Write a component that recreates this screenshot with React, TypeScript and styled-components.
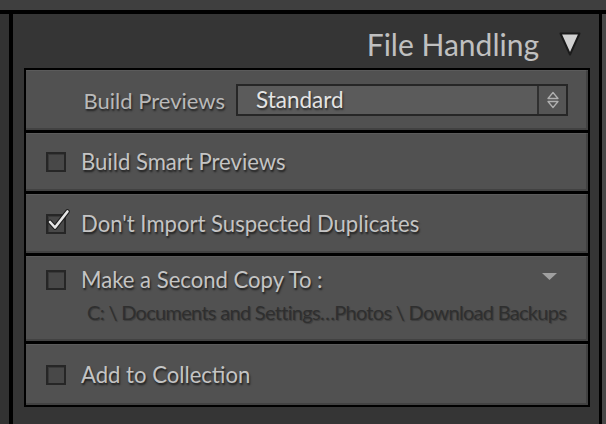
import styled, { createGlobalStyle } from 'styled-components';

const GlobalStyle = createGlobalStyle`
  html, body {
    margin: 0;
    padding: 0;
    background: #3e3e3e;
    overflow: hidden;
  }
  * {
    box-sizing: border-box;
  }
`;

const Frame = styled.div`
  width: 606px;
  height: 424px;
  display: flex;
  flex-direction: column;
  font-family: Lato, "Open Sans", sans-serif;
`;

const TopStrip = styled.div`
  height: 14px;
  background: #3f3f3f;
  border-bottom: 4px solid #000;
`;

const Body = styled.div`
  flex: 1;
  display: flex;
`;

const LeftRail = styled.div`
  width: 13px;
  background: #323232;
  border-right: 4px solid #000;
`;

const RightRail = styled.div`
  width: 7px;
  background: #484848;
  border-left: 3px solid #000;
`;

const Panel = styled.div`
  flex: 1;
  background: #353535;
  padding: 0 9px 0 11px;
`;

const Header = styled.div`
  height: 54px;
  padding: 6px 9px 0 0;
  display: flex;
  align-items: center;
  justify-content: flex-end;
  gap: 20px;
`;

const Title = styled.span`
  font-size: 30px;
  color: #c0c0c0;
`;

const Group = styled.div`
  border: 2px solid #000;
  background: #000;
  display: flex;
  flex-direction: column;
  gap: 3px;
`;

const Row = styled.div<{ $h: number; $top?: number }>`
  height: ${p => p.$h}px;
  background: #515151;
  box-shadow: inset 0 1px 0 rgba(255, 255, 255, 0.06), inset -2px -2px 0 rgba(0, 0, 0, 0.18);
  display: flex;
  flex-direction: column;
  justify-content: ${p => (p.$top ? 'flex-start' : 'center')};
  padding: ${p => p.$top ?? 0}px 0 0 20px;
`;

const Line = styled.div`
  display: flex;
  align-items: center;
`;

const FieldLabel = styled.span`
  width: 179px;
  margin-right: 11px;
  text-align: right;
  font-size: 22px;
  color: #b9b9b9;
  text-shadow: 1px 2px 2px rgba(0, 0, 0, 0.6);
`;

const Select = styled.div`
  width: 332px;
  height: 32px;
  border: 2px solid #262626;
  background: #5b5b5b;
  display: flex;
`;

const SelectValue = styled.span`
  flex: 1;
  padding-left: 18px;
  font-size: 22.5px;
  line-height: 28px;
  color: #e4e4e4;
  text-shadow: 1px 2px 2px rgba(0, 0, 0, 0.55);
`;

const Stepper = styled.div`
  width: 29px;
  border-left: 2px solid #303030;
  background: #555;
  display: flex;
  align-items: center;
  justify-content: center;
`;

const Box = styled.span`
  position: relative;
  width: 20px;
  height: 20px;
  border: 2px solid #262626;
  background: #484848;
  box-shadow: inset 1px 1px 0 rgba(0, 0, 0, 0.2);
  flex-shrink: 0;
  margin-right: 15px;
`;

const Tick = styled.svg`
  position: absolute;
  left: -4px;
  top: -8px;
  overflow: visible;
`;

const Label = styled.span`
  font-size: 22.1px;
  line-height: 28px;
  color: #c4c4c4;
  text-shadow: 1px 2px 2px rgba(0, 0, 0, 0.65);
`;

const Spacer = styled.span`
  flex: 1;
`;

const MiniArrow = styled.svg`
  margin-right: 31px;
  align-self: flex-start;
  margin-top: 7px;
`;

const Path = styled.div`
  padding-left: 41px;
  margin-top: 6px;
  font-size: 20px;
  letter-spacing: -0.7px;
  color: #2f2f2f;
  text-shadow: 1px 1px 1px rgba(0, 0, 0, 0.25);
  white-space: nowrap;
`;

const Check = ({ checked }: { checked?: boolean }) => (
  <Box>
    {checked && (
      <Tick width="26" height="26" viewBox="0 0 26 26">
        <path d="M6 14 L11 19.5 L23.5 3.5" fill="none" stroke="#1c1c1c" strokeWidth="4.6" strokeLinejoin="round" strokeLinecap="round" />
        <path d="M6 14 L11 19.5 L23.5 3.5" fill="none" stroke="#e6e6e6" strokeWidth="2.6" strokeLinejoin="round" strokeLinecap="round" />
      </Tick>
    )}
  </Box>
);

export default function App() {
  return (
    <>
      <GlobalStyle />
      <Frame>
        <TopStrip />
        <Body>
          <LeftRail />
          <Panel>
            <Header>
              <Title>File Handling</Title>
              <svg width="22" height="24" viewBox="0 0 22 24">
                <path d="M1.5 1.5 H20.5 L11 22.5 Z" fill="#d2d2d2" stroke="#1b1b1b" strokeWidth="2" strokeLinejoin="round" />
              </svg>
            </Header>
            <Group>
              <Row $h={60}>
                <Line>
                  <FieldLabel>Build Previews</FieldLabel>
                  <Select>
                    <SelectValue>Standard</SelectValue>
                    <Stepper>
                      <svg width="14" height="20" viewBox="0 0 14 20">
                        <path d="M2 8.5 L7 2.5 L12 8.5 Z M2 11.5 L7 17.5 L12 11.5 Z" fill="none" stroke="#b0b0b0" strokeWidth="1.3" strokeLinejoin="round" />
                      </svg>
                    </Stepper>
                  </Select>
                </Line>
              </Row>
              <Row $h={58}>
                <Line>
                  <Check />
                  <Label>Build Smart Previews</Label>
                </Line>
              </Row>
              <Row $h={59}>
                <Line>
                  <Check checked />
                  <Label>Don't Import Suspected Duplicates</Label>
                </Line>
              </Row>
              <Row $h={85} $top={10}>
                <Line>
                  <Check />
                  <Label>Make a Second Copy To :</Label>
                  <Spacer />
                  <MiniArrow width="15" height="7" viewBox="0 0 15 7">
                    <path d="M0 0 H15 L7.5 7 Z" fill="#a0a0a0" />
                  </MiniArrow>
                </Line>
                <Path>C: \ Documents and Settings…Photos \ Download Backups</Path>
              </Row>
              <Row $h={61}>
                <Line>
                  <Check />
                  <Label>Add to Collection</Label>
                </Line>
              </Row>
            </Group>
          </Panel>
          <RightRail />
        </Body>
      </Frame>
    </>
  );
}
